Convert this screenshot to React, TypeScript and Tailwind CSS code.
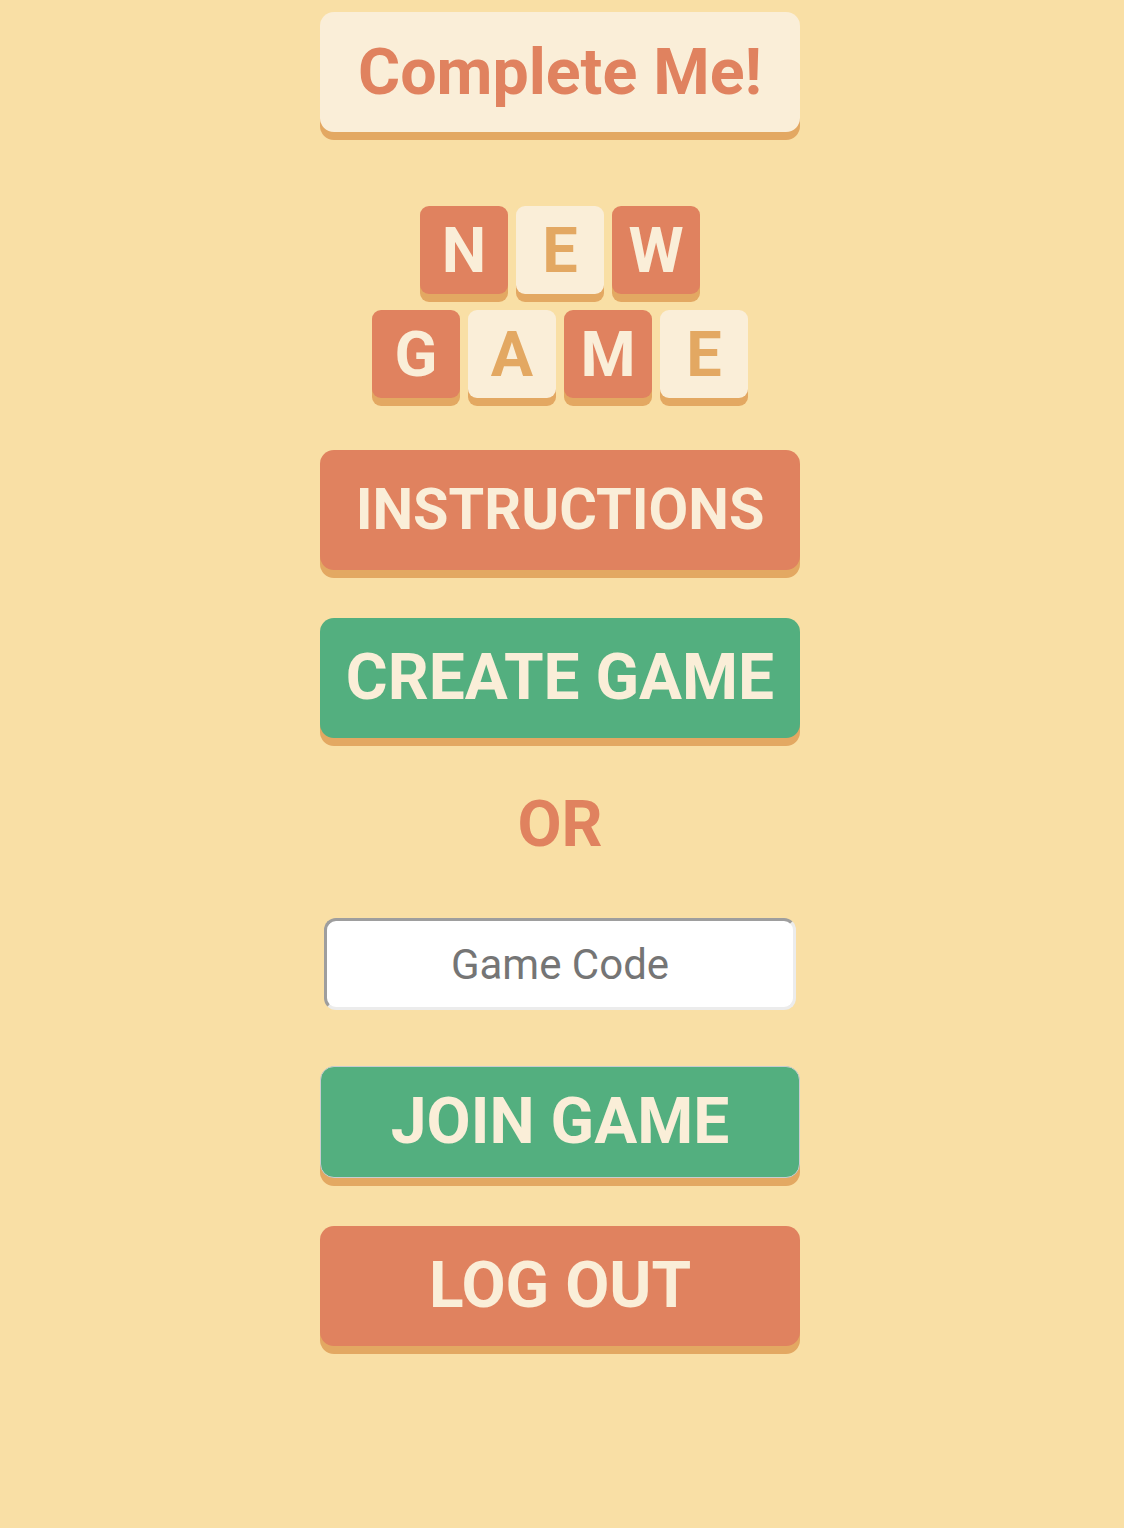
import React from "react";

const font = { fontFamily: "Roboto, 'Noto Sans', sans-serif" };

function Tile({ ch, dark }: { ch: string; dark: boolean }) {
  return (
    <div
      className={`flex h-[88px] w-[88px] items-center justify-center rounded-[9px] shadow-[0_8px_0_#e3a862] text-[63px] font-bold leading-none ${
        dark ? "bg-[#e0825f] text-[#faeed8]" : "bg-[#faeed8] text-[#e3a862]"
      }`}
    >
      {ch}
    </div>
  );
}

export default function App() {
  return (
    <div
      className="flex min-h-[1528px] w-full flex-col items-center bg-[#f9dfa5] pr-[4px]"
      style={font}
    >
      <div className="mt-[12px] flex h-[120px] w-[480px] items-center justify-center rounded-[14px] bg-[#faeed8] shadow-[0_8px_0_#e3a862]">
        <span className="text-[64.5px] font-bold leading-none text-[#e0825f]">Complete Me!</span>
      </div>

      <div className="mt-[74px] flex flex-col items-center gap-[16px]">
        <div className="flex gap-[8px]">
          <Tile ch="N" dark />
          <Tile ch="E" dark={false} />
          <Tile ch="W" dark />
        </div>
        <div className="flex gap-[8px]">
          <Tile ch="G" dark />
          <Tile ch="A" dark={false} />
          <Tile ch="M" dark />
          <Tile ch="E" dark={false} />
        </div>
      </div>

      <button className="mt-[52px] flex h-[120px] w-[480px] items-center justify-center rounded-[14px] bg-[#e0825f] shadow-[0_8px_0_#e3a862]">
        <span className="text-[57.6px] font-bold leading-none text-[#faeed8]">INSTRUCTIONS</span>
      </button>

      <button className="mt-[48px] flex h-[120px] w-[480px] items-center justify-center rounded-[14px] bg-[#53af7f] shadow-[0_8px_0_#e3a862]">
        <span className="text-[64px] font-bold leading-none text-[#faeed8]">CREATE GAME</span>
      </button>

      <div className="mt-[55px] h-[64px] text-[64px] font-bold leading-[64px] text-[#e0825f]">OR</div>

      <div className="mt-[61px] flex h-[92px] w-[472px] items-center justify-center rounded-[12px] border-[3px] border-b-[#ececec] border-l-[#9e9e9e] border-r-[#ececec] border-t-[#9e9e9e] bg-white">
        <input
          placeholder="Game Code"
          className="w-full bg-transparent text-center text-[42px] text-[#757575] placeholder:text-[#757575] outline-none"
          style={font}
        />
      </div>

      <button className="mt-[56px] flex h-[112px] w-[480px] items-center justify-center rounded-[14px] border border-[#c9ccd0] bg-[#53af7f] shadow-[0_8px_0_#e3a862]">
        <span className="text-[64px] font-bold leading-none text-[#faeed8]">JOIN GAME</span>
      </button>

      <button className="mt-[48px] flex h-[120px] w-[480px] items-center justify-center rounded-[14px] bg-[#e0825f] shadow-[0_8px_0_#e3a862]">
        <span className="text-[64px] font-bold leading-none text-[#faeed8]">LOG OUT</span>
      </button>
    </div>
  );
}
